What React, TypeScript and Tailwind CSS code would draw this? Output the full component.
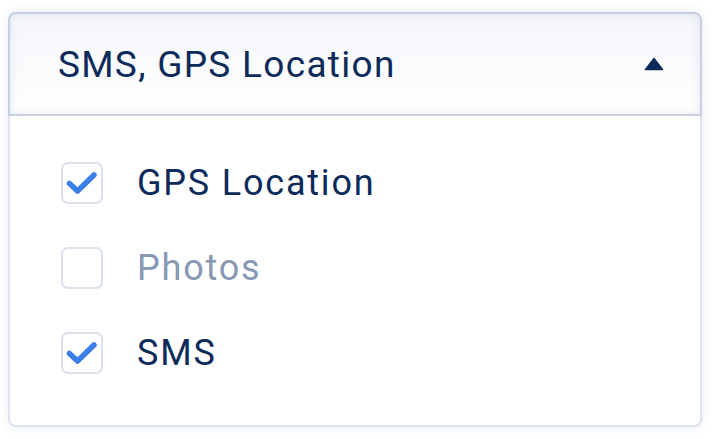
const items = [
  { label: 'GPS Location', checked: true },
  { label: 'Photos', checked: false },
  { label: 'SMS', checked: true },
]

function Check({ checked }: { checked: boolean }) {
  return (
    <span className="flex h-[42px] w-[42px] shrink-0 items-center justify-center rounded-[7px] border-2 border-[#dbe2ee] bg-white">
      {checked && (
        <svg className="h-[38px] w-[38px]" viewBox="0 0 38 38" fill="none">
          <path d="M6.5 19.5L14.5 27L31 11" stroke="#3b7fe9" strokeWidth="5.5" strokeLinecap="round" strokeLinejoin="round" />
        </svg>
      )}
    </span>
  )
}

export default function App() {
  return (
    <div className="h-[439px] w-[714px] bg-white pl-[8px] pt-[12px]" style={{ fontFamily: 'Roboto, "Liberation Sans", sans-serif' }}>
      <div className="w-[694px] rounded-[8px] shadow-[0_0_10px_rgba(200,210,232,0.45)]">
        <div className="flex h-[104px] items-center justify-between rounded-t-[8px] border-2 border-[#c5d0e5] bg-gradient-to-b from-[#f4f6fa] to-white pl-[48px] pr-[36px] shadow-[inset_0_0_10px_rgba(205,214,232,0.55)]">
          <span className="text-[37px] leading-none tracking-[1.3px] text-[#0c2a5a]">SMS, GPS Location</span>
          <svg width="20" height="14" viewBox="0 0 20 14">
            <path d="M10 1.5L18.5 12.5H1.5Z" fill="#0c2a5a" stroke="#0c2a5a" strokeWidth="1.5" strokeLinejoin="round" />
          </svg>
        </div>
        <div className="flex flex-col rounded-b-[8px] border-2 border-t-0 border-[#dde3ee] bg-white pb-[30px] pl-[51px] pt-[24px]">
          {items.map((it) => (
            <label key={it.label} className="flex h-[85px] items-center gap-[34px]">
              <Check checked={it.checked} />
              <span className={`text-[36px] leading-none tracking-[1.8px] ${it.checked ? 'text-[#0c2a5a]' : 'text-[#8798b5]'}`}>
                {it.label}
              </span>
            </label>
          ))}
        </div>
      </div>
    </div>
  )
}
